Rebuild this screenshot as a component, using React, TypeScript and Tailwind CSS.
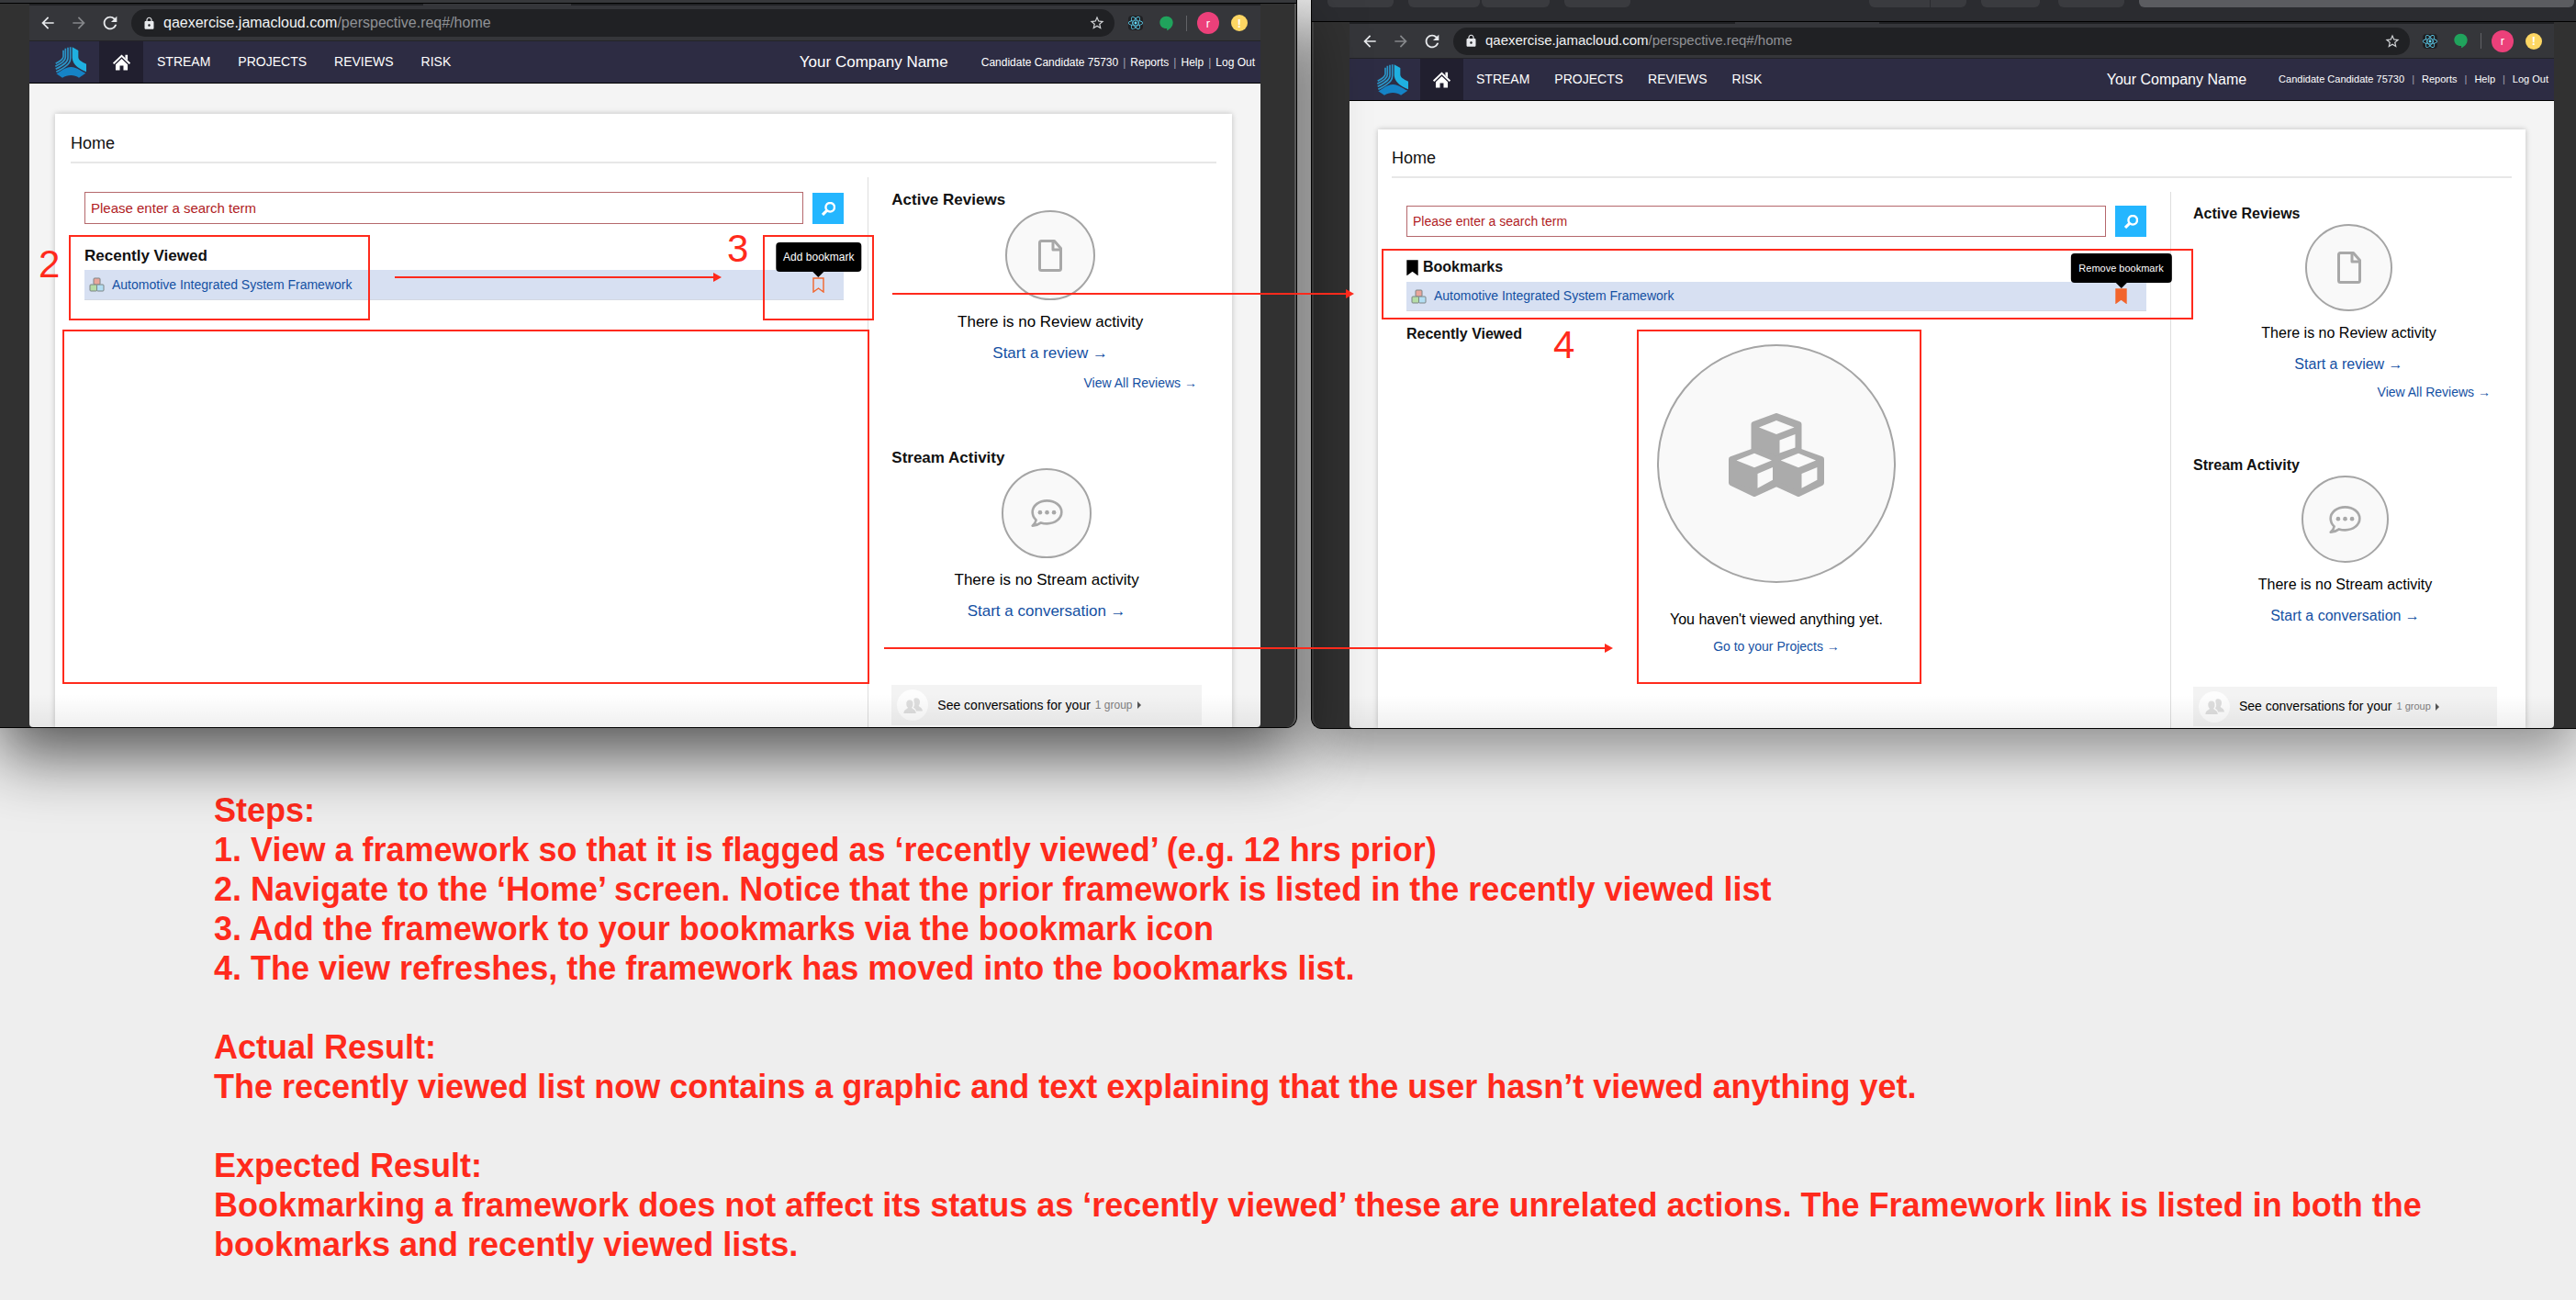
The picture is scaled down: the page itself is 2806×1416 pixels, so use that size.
import type { ReactNode } from "react";
import { MdArrowBack, MdArrowForward, MdLock, MdRefresh, MdStarBorder } from "react-icons/md";
import { FaReact } from "react-icons/fa";

/* ---------- icons ---------- */

function JamaLogo({ className }: { className: string }) {
  return (
    <svg viewBox="0 0 102 102" className={className} aria-label="Jama" role="img">
      <g fill="none" stroke="#2a95c8" strokeWidth="5">
        <path d="M50 1V38C50 55 34 66 4 82" />
        <path d="M42 2V36C42 50 28 60 2 73" />
        <path d="M34 5V34C34 45 24 53 1 64" />
        <path d="M27 11V32C27 40 18 46 2 55" />
      </g>
      <path d="M56 1 76 12V34C77 44 86 49 102 56V82C84 74 58 62 56 36Z" fill="#1fb0e0" />
      <path d="M4 88C20 80 30 67 52 66C74 67 84 80 100 86L78 101C64 90 40 90 24 101Z" fill="#1583c6" />
    </svg>
  );
}

function HomeIcon() {
  return (
    <svg viewBox="0 0 58 54" className="h-[18px] w-[19px]" fill="#fff" aria-hidden="true">
      <path d="M2 31 29 5 56 31" fill="none" stroke="#fff" strokeWidth="6" />
      <path d="M9 34 29 15 49 34V53H35V38H23V53H9Z" />
      <path d="M41 2h8v18l-8-8z" />
    </svg>
  );
}

function SearchIcon() {
  return (
    <svg viewBox="0 0 44 44" className="size-[15px]" fill="none" stroke="#fff" aria-hidden="true">
      <circle cx="27" cy="17" r="14" strokeWidth="7" />
      <path d="M18 26 3 41" strokeWidth="9" />
    </svg>
  );
}

function FrameworkIcon() {
  return (
    <svg viewBox="0 0 34 32" className="h-4 w-[17px] shrink-0" stroke="#7d8484" strokeWidth="2" aria-hidden="true">
      <rect x="10" y="2" width="14" height="14" rx="2" fill="#e9a69b" />
      <rect x="2" y="16" width="15" height="14" rx="2" fill="#b5dca6" />
      <rect x="17" y="16" width="15" height="14" rx="2" fill="#b3def3" />
    </svg>
  );
}

function BookmarkShape({ className }: { className: string }) {
  return (
    <svg viewBox="0 0 13 17" className={className} strokeWidth="1.4" aria-hidden="true">
      <path d="M1 1H12V16L6.5 12L1 16Z" />
    </svg>
  );
}

function DocumentIcon() {
  return (
    <svg viewBox="0 0 26 35" className="h-[35px] w-[26px]" fill="none" stroke="#a8a8a8" strokeWidth="3" strokeLinejoin="round" aria-hidden="true">
      <path d="M3.5 1.5H17.5L24.500 9.500V31.500Q24.500 33.500 22.500 33.500H3.500Q1.500 33.500 1.500 31.500V3.500Q1.500 1.500 3.500 1.500Z" />
      <path d="M16 2V11H24" />
    </svg>
  );
}

function ChatIcon() {
  return (
    <svg viewBox="0 0 104 91" className="h-[30px] w-[35px]" fill="none" stroke="#a8a8a8" strokeWidth="8" strokeLinejoin="round" aria-hidden="true">
      <path d="M52 4C78 4 100 20 100 42C100 64 78 80 52 80C45 80 38 79 32 77C24 83 15 86 4 87C11 81 15 75 16 68C8 61 4 52 4 42C4 20 26 4 52 4Z" />
      <g fill="#a8a8a8" stroke="none">
        <circle cx="29" cy="43" r="7" />
        <circle cx="52" cy="43" r="7" />
        <circle cx="75" cy="43" r="7" />
      </g>
    </svg>
  );
}

function CubesIcon() {
  return (
    <svg viewBox="0 0 104 91" className="h-[91px] w-[104px]" aria-hidden="true">
      <g fill="#ababab" stroke="#ababab" strokeWidth="6" strokeLinejoin="round">
        <path d="M52 3 76.500 12V40L52 49 27.500 40V12Z" />
        <path d="M28 41 52 50V77L28 88 3 76V50Z" />
        <path d="M76 41 101 50V76L76 88 52 77V50Z" />
      </g>
      <g fill="#f9f9f9">
        <path d="M33 15.500 52 8 71.500 15.500 52 23ZM55.500 29.500 72.500 23V37.500L55.500 43.500Z" />
        <path d="M8.500 51.500 28 43.700 47 51.500 28 59.300ZM31.500 66 48 59V72.700L31.500 81.700Z" />
        <path d="M56.700 51.500 76 43.700 95 51.500 76 59.300ZM79.500 66 96.400 59V72.700L79.500 81.700Z" />
      </g>
    </svg>
  );
}

function PeopleIcon() {
  return (
    <svg viewBox="0 0 62 52" className="h-[17px] w-[21px]" fill="#dedede" aria-hidden="true">
      <path d="M36 2C46-2 54 4 54 14C54 20 52 24 50 26C50 31 62 31 63 44H42C40 36 34 34 32 32C36 28 36 24 36 20C34 14 32 6 36 2Z" />
      <path d="M20 8C28 8 32 14 31 22C31 27 29 30 27 32C27 39 41 37 41 52H0C0 37 14 39 14 32C11 30 9 27 9 22C8 14 12 8 20 8Z" />
    </svg>
  );
}

function HangoutsIcon() {
  return (
    <svg viewBox="0 0 46 50" className="h-[17px] w-[15px]" fill="#20a35c" aria-hidden="true">
      <path d="M23 1C36 1 45 10 45 22C45 35 35 44 25 49V42C11 43 1 34 1 22C1 10 10 1 23 1Z" />
    </svg>
  );
}

/* ---------- window variants ---------- */

type Variant = {
  bookmarked: boolean;
  toolbar: string;
  url: string;
  extensions: string;
  nav: string;
  homeTab: string;
  navLinks: string;
  company: string;
  account: string;
  page: string;
  card: string;
  body: string;
  main: string;
  search: string;
  input: string;
  heading: string;
  row: string;
  tooltip: string;
  side: string;
  reviews: string;
  stream: string;
  circle: string;
  message: string;
  viewAll: string;
  streamGap: string;
  group: string;
  groupCount: string;
};

const before: Variant = {
  bookmarked: false,
  toolbar: "h-[38px] pl-[10px] pr-[14px]",
  url: "text-[16px]",
  extensions: "pl-[15px]",
  nav: "h-[47px] pl-7",
  homeTab: "ml-[14px] w-12",
  navLinks: "gap-[30px] pl-[15px]",
  company: "mr-9 text-[17px]",
  account: "gap-[5px] text-[12px]",
  page: "pl-7 pr-[31px] pt-[33px]",
  card: "px-[17px] pt-5",
  body: "grid-cols-[869fr_380fr]",
  main: "pl-[15px] pr-[26px] pt-4",
  search: "h-[35px] mb-6",
  input: "text-[15px]",
  heading: "text-[17px]",
  row: "h-[33px] mt-[4px]",
  tooltip: "px-2 text-[12px]",
  side: "pl-[25px] pt-[14px]",
  reviews: "pr-2",
  stream: "pr-4",
  circle: "size-[98px]",
  message: "text-[17px]",
  viewAll: "mt-[10px] pr-[13px]",
  streamGap: "mt-[61px]",
  group: "mt-[68px] h-11 mr-4",
  groupCount: "text-[12px]",
};

const after: Variant = {
  bookmarked: true,
  toolbar: "h-[37px] pl-3 pr-[13px]",
  url: "text-[15px]",
  extensions: "pl-[14px]",
  nav: "h-[47px] pl-[30px]",
  homeTab: "ml-[13px] w-[47px]",
  navLinks: "gap-[27px] pl-[14px]",
  company: "mr-[35px] text-[16px]",
  account: "gap-[8px] text-[11px]",
  page: "pl-[31px] pr-[31px] pt-[31px]",
  card: "px-[15px] pt-[19px]",
  body: "grid-cols-[848fr_372fr]",
  main: "pl-4 pr-[26px] pt-[15px]",
  search: "h-[34px] mb-[22px]",
  input: "text-[14px]",
  heading: "text-[16px]",
  row: "h-8 mt-[5px]",
  tooltip: "px-[9px] text-[11px]",
  side: "pl-6 pt-[13px]",
  reviews: "pr-2",
  stream: "pr-4",
  circle: "size-[95px]",
  message: "text-[16px]",
  viewAll: "mt-2 pr-[15px]",
  streamGap: "mt-[59px]",
  group: "mt-[65px] h-[43px] mr-4",
  groupCount: "text-[11px]",
};

/* ---------- browser chrome ---------- */

function BrowserToolbar({ v }: { v: Variant }) {
  return (
    <div className={`flex items-center bg-[#35363a] ${v.toolbar}`}>
      <div className="flex gap-[14px] pr-[13px] text-[20px] text-[#e8eaed]">
        <button aria-label="Back"><MdArrowBack /></button>
        <button aria-label="Forward" className="text-[#85878a]"><MdArrowForward /></button>
        <button aria-label="Reload"><MdRefresh className="scale-110" /></button>
      </div>
      <div className="flex h-[30px] min-w-0 flex-1 items-center rounded-full bg-[#202124] pl-3 pr-[10px]">
        <MdLock className="mr-2 text-[15px] text-[#e8eaed]" />
        <span className={`flex-1 whitespace-nowrap text-[#909296] ${v.url}`}>
          <span className="text-[#f1f3f4]">qaexercise.jamacloud.com</span>/perspective.req#/home
        </span>
        <button aria-label="Bookmark this page" className="text-[18px] text-[#d0d2d5]"><MdStarBorder /></button>
      </div>
      <div className={`flex items-center ${v.extensions}`}>
        <span className="mr-[18px] flex size-4 items-center justify-center rounded-sm bg-[#202124] text-[16px] text-[#61dafb]"><FaReact /></span>
        <HangoutsIcon />
        <span className="ml-[14px] mr-[11px] h-[17px] w-px bg-[#626367]" />
        <span className="mr-[13px] flex size-6 items-center justify-center rounded-full bg-[#ec407a] text-[13px] leading-none text-white">r</span>
        <span className="flex size-[18px] items-center justify-center rounded-full bg-[#fdd663] text-[13px] font-bold leading-none text-white">!</span>
      </div>
    </div>
  );
}

function NavBar({ v }: { v: Variant }) {
  return (
    <nav className={`flex items-center border-b border-t border-b-black border-t-[#232327] bg-[#2d2c43] text-white ${v.nav}`}>
      <JamaLogo className="size-[34px] shrink-0" />
      <a href="#home" aria-label="Home" className={`flex h-full items-center justify-center bg-[#211f2f] ${v.homeTab}`}>
        <HomeIcon />
      </a>
      <div className={`flex flex-1 text-[14px] ${v.navLinks}`}>
        <a href="#stream">STREAM</a>
        <a href="#projects">PROJECTS</a>
        <a href="#reviews">REVIEWS</a>
        <a href="#risk">RISK</a>
      </div>
      <span className={`whitespace-nowrap ${v.company}`}>Your Company Name</span>
      <div className={`flex whitespace-nowrap pr-[6px] ${v.account}`}>
        <a href="#account">Candidate Candidate 75730</a>
        <span className="text-[#a5a4b2]">|</span>
        <a href="#reports">Reports</a>
        <span className="text-[#a5a4b2]">|</span>
        <a href="#help">Help</a>
        <span className="text-[#a5a4b2]">|</span>
        <a href="#logout">Log Out</a>
      </div>
    </nav>
  );
}

/* ---------- page content ---------- */

function FrameworkRow({ v }: { v: Variant }) {
  const label = v.bookmarked ? "Remove bookmark" : "Add bookmark";
  return (
    <div className={`flex items-center border-b border-[#d3d8e2] bg-[#d7e0f2] pl-[5px] pr-[21px] ${v.row}`}>
      <FrameworkIcon />
      <a href="#framework" className="ml-2 flex-1 text-[14px] text-[#1450a3]">Automotive Integrated System Framework</a>
      <div className="relative">
        <button aria-label={label} className="block">
          <BookmarkShape
            className={v.bookmarked ? "h-[17px] w-[13px] fill-[#f2652c] stroke-[#f2652c]" : "h-[17px] w-[13px] fill-none stroke-[#f2652c]"}
          />
        </button>
        <div
          role="tooltip"
          className={`absolute bottom-full left-1/2 mb-[6px] flex h-8 -translate-x-1/2 items-center whitespace-nowrap rounded bg-black text-white ${v.tooltip}`}
        >
          {label}
          <span className="absolute left-1/2 top-full -translate-x-1/2 border-x-[6px] border-t-[6px] border-x-transparent border-t-black" />
        </div>
      </div>
    </div>
  );
}

function EmptyCircle({ className, children }: { className: string; children: ReactNode }) {
  return (
    <div className={`flex items-center justify-center rounded-full border-2 border-[#a5a5a5] bg-[#f9f9f9] ${className}`}>
      {children}
    </div>
  );
}

function HomeCard({ v }: { v: Variant }) {
  return (
    <main className={`bg-white text-[#111] shadow-[0_0_6px_rgba(0,0,0,0.22)] ${v.card}`}>
      <h1 className="mb-2 text-[18px] leading-6">Home</h1>
      <hr className="mb-[15px] border-t-2 border-[#e7e7e7]" />
      <div className={`grid ${v.body}`}>
        <section className={v.main}>
          <form className={`flex items-end gap-[10px] ${v.search}`}>
            <input
              type="text"
              aria-label="Search"
              placeholder="Please enter a search term"
              className={`h-full min-w-0 flex-1 border border-[#b5686c] bg-white px-[6px] placeholder:text-[#b01c24] ${v.input}`}
            />
            <button type="button" aria-label="Search" className="flex h-[34px] w-[34px] items-center justify-center bg-[#24b6ff]">
              <SearchIcon />
            </button>
          </form>
          {v.bookmarked ? (
            <>
              <h2 className={`flex items-center gap-[5px] font-bold leading-[22px] ${v.heading}`}>
                <BookmarkShape className="h-[17px] w-[13px] fill-black stroke-black" />
                Bookmarks
              </h2>
              <FrameworkRow v={v} />
              <h2 className={`mt-[14px] font-bold leading-[22px] ${v.heading}`}>Recently Viewed</h2>
              <div className="flex flex-col items-center">
                <EmptyCircle className="size-[260px]">
                  <div className="-mt-5"><CubesIcon /></div>
                </EmptyCircle>
                <p className="mt-7 text-[16px] leading-6 text-black">You haven't viewed anything yet.</p>
                <a href="#projects" className="mt-[7px] text-[14px] leading-5 text-[#1450a3]">Go to your Projects →</a>
              </div>
            </>
          ) : (
            <>
              <h2 className={`font-bold leading-[22px] ${v.heading}`}>Recently Viewed</h2>
              <FrameworkRow v={v} />
            </>
          )}
        </section>

        <aside className={`border-l border-[#dedede] pb-[2px] ${v.side}`}>
          <div className={v.reviews}>
            <h2 className={`font-bold leading-[22px] ${v.heading}`}>Active Reviews</h2>
            <div className={`flex flex-col items-center gap-[10px] leading-6 ${v.message}`}>
              <EmptyCircle className={v.circle}><DocumentIcon /></EmptyCircle>
              <p className="mt-[2px] text-black">There is no Review activity</p>
              <a href="#review" className="text-[#1450a3]">Start a review →</a>
            </div>
            <div className={`text-right text-[14px] leading-5 ${v.viewAll}`}>
              <a href="#reviews" className="text-[#1450a3]">View All Reviews →</a>
            </div>
          </div>
          <div className={`${v.stream} ${v.streamGap}`}>
            <h2 className={`font-bold leading-[22px] ${v.heading}`}>Stream Activity</h2>
            <div className={`flex flex-col items-center gap-[10px] leading-6 ${v.message}`}>
              <EmptyCircle className={v.circle}><ChatIcon /></EmptyCircle>
              <p className="mt-[2px] text-black">There is no Stream activity</p>
              <a href="#conversation" className="text-[#1450a3]">Start a conversation →</a>
            </div>
          </div>
          <a href="#groups" className={`flex items-center bg-[#f3f3f3] pl-[6px] ${v.group}`}>
            <span className="mr-[10px] flex size-[34px] items-center justify-center rounded-full bg-[#fdfdfd]"><PeopleIcon /></span>
            <span className="text-[14px] text-black">See conversations for your</span>
            <span className={`ml-[5px] text-[#808080] ${v.groupCount}`}>1 group</span>
            <span className="ml-[5px] border-y-4 border-l-4 border-y-transparent border-l-[#555]" />
          </a>
        </aside>
      </div>
    </main>
  );
}

function BrowserPage({ v }: { v: Variant }) {
  return (
    <div className="relative overflow-hidden rounded-b bg-[#f4f4f4]">
      <div className="flex h-[2px] bg-[#202124]">
        <span className="ml-[32%] w-[12%] bg-[#35363a]" />
      </div>
      <BrowserToolbar v={v} />
      <NavBar v={v} />
      <div className={v.page}>
        <HomeCard v={v} />
      </div>
      <div className="pointer-events-none absolute inset-x-0 bottom-0 h-9 bg-linear-to-b from-transparent to-black/6" />
    </div>
  );
}

/* ---------- annotations ---------- */

function Highlight({ className }: { className: string }) {
  return <div className={`absolute border-2 border-[#ff2a1c] ${className}`} />;
}

function Arrow({ className }: { className: string }) {
  return (
    <div className={`absolute flex h-[10px] items-center ${className}`}>
      <span className="h-[2px] flex-1 bg-[#ff2a1c]" />
      <span className="border-y-[5px] border-l-[9px] border-y-transparent border-l-[#ff2a1c]" />
    </div>
  );
}

function StepNumber({ className, children }: { className: string; children: ReactNode }) {
  return <span className={`absolute text-[42px] leading-[42px] text-[#ff2a1c] ${className}`}>{children}</span>;
}

function Annotations() {
  return (
    <div className="pointer-events-none absolute inset-0 z-20">
      <StepNumber className="left-[42px] top-[267px]">2</StepNumber>
      <Highlight className="left-[75px] top-[256px] h-[93px] w-[328px]" />
      <Arrow className="left-[430px] top-[297px] w-[356px]" />
      <StepNumber className="left-[792px] top-[250px]">3</StepNumber>
      <Highlight className="left-[831px] top-[256px] h-[93px] w-[121px]" />
      <Arrow className="left-[972px] top-[315px] w-[503px]" />
      <Highlight className="left-[68px] top-[359px] h-[386px] w-[879px]" />
      <Arrow className="left-[963px] top-[701px] w-[794px]" />
      <Highlight className="left-[1505px] top-[271px] h-[77px] w-[884px]" />
      <StepNumber className="left-[1692px] top-[355px]">4</StepNumber>
      <Highlight className="left-[1783px] top-[359px] h-[386px] w-[310px]" />
    </div>
  );
}

/* ---------- layout ---------- */

export default function App() {
  return (
    <div className="relative min-h-screen overflow-hidden bg-[#eeeeee] font-['Liberation_Sans',Arial,sans-serif]">
      <div className="grid grid-cols-[1413fr_1378fr] items-start gap-[15px]">
        <div className="relative z-10 min-w-0 rounded-br-xl border-b border-r border-black bg-[#313131] shadow-[0_30px_70px_rgba(0,0,0,0.65)]">
          <div className="h-1 border-b border-black bg-[#37383b]" />
          <div className="rounded-br-[11px] border-r-2 border-[#555] pl-8 pr-[37px]">
            <BrowserPage v={before} />
          </div>
        </div>

        <div className="relative min-w-0 rounded-bl-xl border-b border-l border-black bg-[#313131] shadow-[0_25px_60px_rgba(0,0,0,0.4)]">
          <div className="flex h-6 items-start border-b border-black bg-[#2b2c30] pl-[17px]">
            <div className="flex h-2 min-w-0 flex-1">
              <span className="mr-4 w-[72px] rounded-b-md bg-[#3a3b3f]" />
              <span className="mr-[2px] w-[78px] rounded-b-md bg-[#3a3b3f]" />
              <span className="mr-4 w-[74px] rounded-b-md bg-[#3a3b3f]" />
              <span className="mr-[260px] w-[72px] rounded-b-md bg-[#3a3b3f]" />
              <span className="mr-px w-[66px] rounded-bl-md bg-[#3a3b3f]" />
              <span className="mr-4 w-[39px] rounded-br-md bg-[#3a3b3f]" />
              <span className="mr-5 w-16 rounded-b-md bg-[#3a3b3f]" />
              <span className="mr-4 w-[72px] rounded-b-md bg-[#3a3b3f]" />
              <span className="mr-[2px] flex-1 rounded-b-md bg-[#5b5c60]" />
            </div>
          </div>
          <div className="rounded-bl-[11px] border-l-2 border-[#444] pl-[39px] pr-6">
            <BrowserPage v={after} />
          </div>
        </div>
      </div>

      <article className="pl-[233px] pr-[150px] pt-[67px] text-[36px] font-bold leading-[43px] text-[#ff2a1c]">
        <h2>Steps:</h2>
        <p>1. View a framework so that it is flagged as ‘recently viewed’ (e.g. 12 hrs prior)</p>
        <p>2. Navigate to the ‘Home’ screen. Notice that the prior framework is listed in the recently viewed list</p>
        <p>3. Add the framework to your bookmarks via the bookmark icon</p>
        <p>4. The view refreshes, the framework has moved into the bookmarks list.</p>
        <h2 className="mt-[43px]">Actual Result:</h2>
        <p>The recently viewed list now contains a graphic and text explaining that the user hasn’t viewed anything yet.</p>
        <h2 className="mt-[43px]">Expected Result:</h2>
        <p>
          Bookmarking a framework does not affect its status as ‘recently viewed’ these are unrelated actions. The Framework
          link is listed in both the bookmarks and recently viewed lists.
        </p>
      </article>

      <Annotations />
    </div>
  );
}
